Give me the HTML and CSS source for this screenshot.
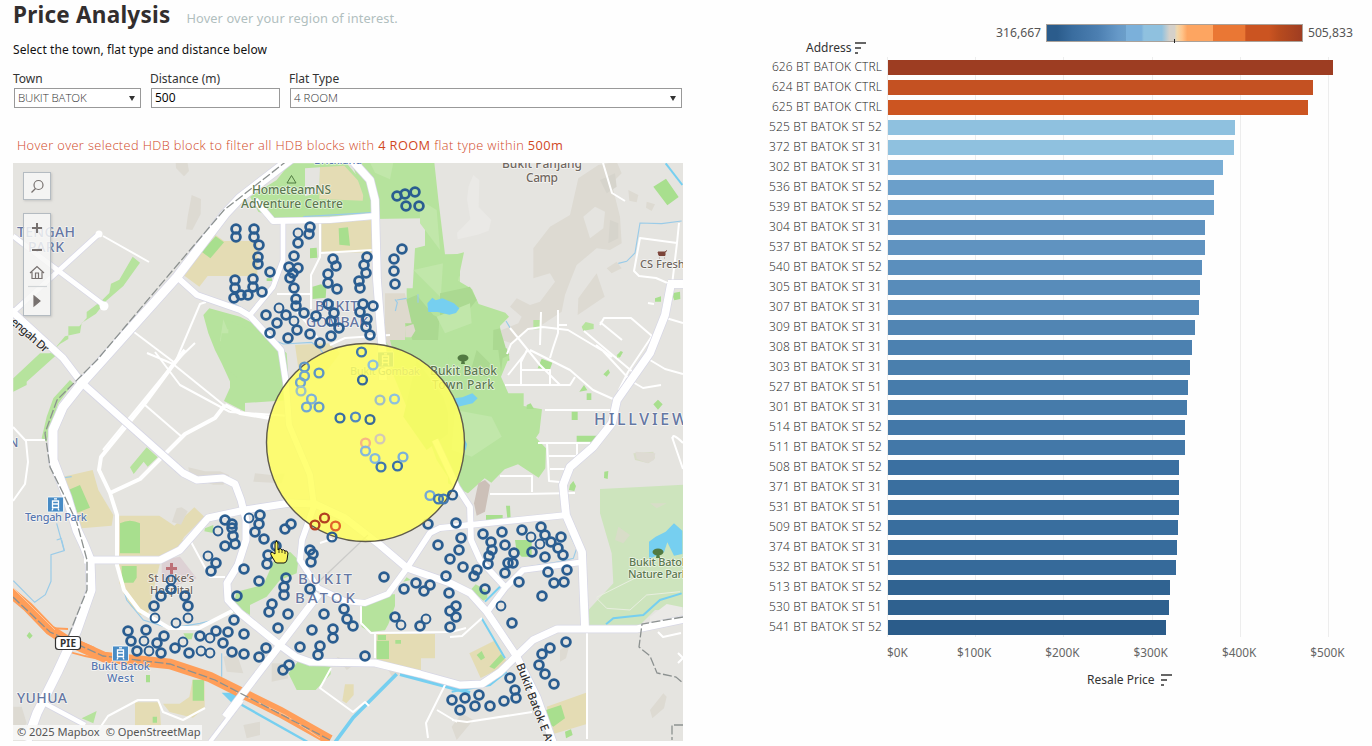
FILE: index.html
```html
<!DOCTYPE html>
<html lang="en">
<head>
<meta charset="utf-8">
<title>Price Analysis</title>
<link rel="stylesheet" href="styles.css">
</head>
<body>
<main class="dashboard">
<section class="left">
  <header class="heading"><h1>Price Analysis</h1><span class="tagline">Hover over your region of interest.</span></header>
  <p class="intro">Select the town, flat type and distance below</p>
  <div class="filters">
    <label class="field town"><span class="caption">Town</span><span class="box"><span class="value">BUKIT BATOK</span><i class="arrow"></i></span></label>
    <label class="field distance"><span class="caption">Distance (m)</span><span class="box"><span class="value strong">500</span></span></label>
    <label class="field flat"><span class="caption">Flat Type</span><span class="box"><span class="value">4 ROOM</span><i class="arrow"></i></span></label>
  </div>
  <p class="hint"><span>Hover over selected HDB block to filter all HDB blocks with <b>4 ROOM</b> flat type within <b>500m</b></span></p>
  <div class="map">
  <svg class="canvas" viewBox="13 163 670 578" width="670" height="578">
    <rect x="13" y="163" width="670" height="578" fill="#e5e4e0"/>
    <!-- land cover, one group per map tile -->
    <g transform="translate(10 160) scale(.33333)">
      <path class="relief" d="M497 5h35l5 28-15 16-24-25zM545 105l28 12-1 45-25 48-19-2 5-38z"/>
      <path class="sand" d="M520 345l52-68 45-52 25 18h100v105H593l-25 32z"/>
      <path class="grass2" d="M575 275l42-46 25 18-41 48z"/>
      <path class="grass" d="M368 290l22 18-50 70-52 45-30 38-43 28-5 30-45 10-50 60-45 40H70l45-45 35-32 25-15v-38h33l22-25 0-18 43-32 25-25 5-28 25-12z"/>
      <path class="grass" d="M580 465l18-20 92 25 60 30 80 80 10 140-150 10-55-120-20-40-20-50z"/>
      <path class="grass3" d="M640 478l12 30h28l10 60-60-25z"/>
    </g>
    <g transform="translate(230 160) scale(.33333)">
      <path class="grass" d="M140 60l40-50h170l50 60 20 40 5 55-150 5-140 5-50-20-25-45z"/>
      <path class="sand" d="M268 22l75-5 60 65-5 40-130-5z"/>
      <path d="M225 25l45-3-3 75-42 12z" fill="#e5e4e0"/>
      <path class="grass" d="M365 8h248l12 110 20 165 45-1v310l60 60v90H530l-70-170v-85l70-2v-100h18l7-120 30-8v-82l-160 2z"/>
      <path class="grass3" d="M420 8h70l-10 50-45-20zM570 120l50 30 10 120-60-80zM550 330l90-20 50 40v60l-60 0z"/>
      <path class="grass4" d="M500 430l60-25 50 60 60 30-20 70-100-20zM610 520l80 30v80z"/>
      <path d="M465 400h60l20 90h-20v50l40 60-70-10-30-50zM525 500l25-8 6 20-12 20h-18z" fill="#ded9cd"/>
      <path class="sand" d="M275 190l152-10v98l-152-3z"/>
      <path class="grass2" d="M326 205l28-3 6 55-32-3zM240 265l20-2 2 30-22 2zM248 380l25-7 16 10-2 30-39 4zM110 355h16v8h-16z"/>
      <path class="sand" d="M195 555l100-5 35 30-60 80h-60z"/>
      <path class="stream" d="M495 418l7 10-6 25M500 420l30-5M564 403v25M605 432l20-6M130 540l30 12 85-5 25 20 15 20M10 430l45 25M220 170l205-12" />
    </g>
    <g transform="translate(450 160) scale(.33333)">
      <path class="relief light" d="M70 45l18 15-2 80 38 40-8 32-33 12-60 14-2-20 40-40-10-60 5-40z"/>
      <path class="relief" d="M385 55l60-40 55-10 15 35-30 30 25 100 5 80-35 20-40-5-60 50-20 50-15 40-10 50-60 40-50 20-40 35-30-10-20 50-20 10v-60l40-30 50-20 10-20-35-30 20-25 40 20 30-10 45-60-15-25-50 15v-90l50-65 60-35zM385 415l55-75 24 70-81 55zM535 90l30 15-5 22-22-5zM590 125l25 8-10 20-17-10zM470 325l30-20 15 20-30 15z"/>
      <path d="M400 170l35-30 30 15-5 50-40 30z" fill="#e5e4e0"/>
      <path d="M450 60l45-20 5 40-30 20zM480 180l25 10v45l-30 15z" fill="#d6d4cc"/>
      <path class="grass2" d="M610 80l38-24 38 55-34 25zM665 400l25-5 1 22-18 4zM615 415l18-6v16h-18z"/>
      <path class="grass" d="M250 480h20v28h-20zM395 500l12-14 24 6v15l-31 5zM500 585l17-11-5 15-10 6zM-20 293l62-16-18 85 42 25 20 45 80 26 11 12-27 28 5 55 23 40v10H-40z"/>
      <path class="grass4" d="M-30 400l90-20 20 40-40 50-70 20zM130 510l20-5 28 95h-50z"/>
      <path class="grass3" d="M-40 470l100-40 5 60-80 30z"/>
      <path class="stream wide" d="M647 10l50 65"/><path class="stream" d="M695 183l-60 8-65-2-15 90-25 25-25 6M168 483l12 20"/>
      <path class="river" d="M-68 430l15-17 10 8 20-6 35 15 16 15-10 14-20 5-35-8-28 0z"/>
    </g>
    <g transform="translate(10 350) scale(.33333)">
      <path class="grass" d="M90 10h55L50 95v10L10 125V85z"/>
      <path class="grass" d="M180 90l10 10-45 60-25 75-10 40-15-10 15-65 20-55z"/>
      <path class="grass" d="M635-50l70 0v235l-63-32 18-40v-85l-30-30z"/>
      <path class="sand" d="M160 380l88-20 17 60 45 75-5 32-90 8-20-40-40-75zM328 497h120l45 30 60-55 30 28-60 60-25 40h-60v50l-25 150-50-30-35-70z"/>
      <path class="grass2" d="M175 420l35-15 30 68-38 15zM330 520q30-15 60 0v90h-60z"/>
      <path class="grass" d="M360 352l50-60 33 30-30 28-12-15-30 37zM585 535l25-10v24l-27-5z"/>
      <path class="relief" d="M535 352l50 12 45 0 28 12-18 28-30 0-70-22zM500 475l15-3 18 12-20 40-27-8z"/>
      <path class="stream" d="M185 380l-24 3 28 70M140 520l22 80"/>
    </g>
    <g transform="translate(230 340) scale(.33333)">
      <path class="grass" d="M-5-60l100 45 65 65 2 70-45-15h-50l-30 20-42-35z"/>
      <path class="grass" d="M480 0h240v390l-40 60-60-90-40-110-60-100z"/>
      <path class="grass4" d="M560 60l80 110 30 100-80 60-70-100z"/>
      <path class="relief" d="M75 400l50 5 40-5-10 30-85-5z"/>
      <path class="river" d="M680 175l20-10 40-10-10 35-48 15zM703 290l8 15-5 25-10-5z"/>
    </g>
    <g transform="translate(450 350) scale(.33333)">
      <path class="grass" d="M-5 0h175l8 20-25 60 22 50h46l0 38 55 10-8 70-10 15 30 32-2 60-20 28-62-40-40 15-40 40-20-13-50 45-60-30z"/>
      <path class="grass4" d="M145 0l25-5 8 20-20 10-5 40zM80 0l40 40-10 40-50-10z"/>
      <path class="grass3" d="M15 180l110 20 30 60-90 60-60-20z"/>
      <path d="M85 400l20-10 15 15-15 80-25 12-8-37z" fill="#ccc0b8"/>
      <path class="river" d="M12 145l25-3 30-12 16 15-15 15-50 12zM43 267l8 15-4 20-5-10z"/>
      <path class="grass2" d="M263 55l12-29 32 12-7 20zM388 125l14-20 10 16zM410 130h14v20h-14zM365 185h18v25h-18zM380 257h62l-15 18h-47zM463 365l12-2-2 24-11-3zM360 405l10-12 8 15-5 15-16-3zM460 73l15-15 5 10-10 12zM610 163l14-14 14 14-14 16zM108 495h50v20h-50zM168 467l12 0 2 40-10-2zM502 15l10-12 7 4-10 16zM230 165l12-5 10 17h-22z"/>
      <path d="M450 417l120-6 130-7v376l-85 0-60 60-140 0V780L490 700l-5-90-35-120z" fill="#cde4bd"/>
      <path d="M505 530l35 25-20 25-25-10zM600 460l50 0-30 15zM550 310l60-5 5 20-20 15-40-10z" fill="#d8ddc8"/>
      <path d="M556 305l60 5-4 20-20 10-32-14z" fill="#dedbd3"/>
      <path class="river" d="M597 575l20-15 30-15 25-25 25 22v70l-25 5-20-40-10 30-45 20z"/>
    </g>
    <g transform="translate(10 540) scale(.33333)">
      <path class="sand" d="M330 0h200l-15 35-60 15-20 80-20 85-25 10-50-65-15-60zM375 487h73l5 70h-78zM548 418h36v85l-35 30-70-17-20-25h50l29-20z"/>
      <path class="grass2" d="M330-10h60v50h-60zM335 78h45v35l-10 15h-35zM548 420h34v62h-34zM408 405h12v22h-12zM428 530h13v18h-13zM50 287l8-11 10 11-9 10z"/>
      <path d="M455 60l55-10 50 65-60 20-45-10z" fill="#ddd1d4"/>
      <path class="relief" d="M10 500l25 0 15 50-25 30-15-10zM640 350l40-10 20 60-50-5z"/>
      <path class="grass" d="M215 535l45-22-10 37zM520 280h30l-5 18h-15zM665 220v-20l25-10v25z"/>
      <path class="stream" d="M155 0l8 32-40 12 0 80-17 40-32 23-64-65M325 90l25 90 50 60 80 25 90-15 40-10M635 340v70M140 0l15-5"/>
      <path class="river" d="M635 458h55l-25 30z"/>
    </g>
    <g transform="translate(230 540) scale(.33333)">
      <path class="grass" d="M205 60l-5 40-50 20-40 50-50 25 0 30-50-30 10-40 80-20 30-70 50-30zM390 195l50-20 35-12h20v35l-20 55-10 18-45 5-25-15zM175 400l30-37 97 18v22l-45 47h-57zM520 125l10-13 12 8z"/>
      <path class="sand" d="M440 282h175v73h-42v40l-133-37zM345 433h26v32l-22 25-12-8z"/>
      <path class="grass2" d="M440 302h37v55h-37zM443 285h25v15h-25zM496 300h17v11h-17z"/>
      <path class="relief" d="M125 370l40 0 10 45-50 10zM40 555l50-10 0 40-40 10zM320 350l60 20-30 20zM470 380l40 20-20 18z"/>
      <path class="canal" d="M500 402l-130 130-55 75M510 403l210 55"/>
      <path class="canal thin" d="M0 475l240 135"/>
    </g>
    <g transform="translate(450 540) scale(.33333)">
      <path class="grass2" d="M195 0h50v50h-30l-15-15z"/><path class="grass" d="M62 150l15-17 35 20v22l-12 7z"/>
      <path class="sand" d="M58 340l75-38 42 70-83 42zM290 500l118-42v95l-95 28z"/>
      <path class="grass2" d="M80 345l15-12 10 20-12 8zM118 380l35-38 10 15-30 30zM288 510l45-15 12 40-35 25-8-5zM345 575l18-7 5 17-20 10z"/>
      <path class="relief" d="M330 330l30-20-12 45-18 10zM600 510l40-50 10 10-8 35-35 30zM5 560l30-40 35 20-50 60z"/>
      <path class="relief light" d="M600 230l50-38 48 10v40l-98 10z"/>
      <path class="stream wide" d="M695 160l-65 20-50 45-90 10-22 18M95 235l70 120M105 185l50-50M170 395l-50 40-115 20"/>
      <path class="stream" d="M210 85l120-20 40-10 10-30-20-40M342-75l30 80"/>
      <path d="M440 175l30 30 70 5 50-45 100-10M440 172l130-65" class="path"/>
    </g>
    <!-- expressway -->
    <path d="M10 592L28 607 50 630 64 639 104 657 170 664 210 677 240 692 280 712 330 740" fill="none" stroke="#ff9e59" stroke-width="10.500"/>
    <path d="M48 628L68 629M62 650L85 656 110 661M72 638L95 648" fill="none" stroke="#ff9e59" stroke-width="1.800"/>
    <path d="M236 692L285 715 320 738M13 588L55 630" fill="none" stroke="#ffd0ad" stroke-width=".8"/>
    <!-- minor streets -->
    <g class="minor">
      <path d="M103 236L149 262M134 332L175 363 200 304 206 302M195 343L174 363 130 417 103 450M155 352L180 385 230 412M145 405L182 437M147 353L173 364 225 406 240 411"/>
      <path class="double" d="M185 350L173 365 145 403 101 457 99 470 110 493M110 493l30-14 45-45 30-16 10-13M110 493l7 22v50l7 25 15 20 30 18h30l35-18M225 405l15 8 30 5"/>
      <path d="M13 427l13 14 2 21-3 22-12 17M25 440h20"/>
      <path d="M320 222v35l-9 18v19h-34M320 253l53-3M311 294v15M330 345l15-7 45-3M320 341l-15-20-10-12M230 412l60 4"/>
      <path d="M603 163l9 30 13 8M640 238l37 5-5 42-16-7-17-2-5-5 6-33zM677 243l2-20M654 304l-6-1M683 323l-17-5"/>
      <path d="M541 312l-1 33M558 310v23l-5 15-3 10M557 325h10M510 328l30 37 20 20M507 354l4-10 17-15 15-2 25 3 35 21 28 30 12 7 18-3M528 350l-20 25M600 325l4-7 27 0 21 18-24 36-9 18M584 331l50 42M600 322l22 18M612 357l-16-12M527 350l-6 12v23M520 370h30v15M505 385h65l5-8M530 350l40 20 23 20 20 9M545 410h66M538 443h52M547 443l2 38 11 1M577 443v13h-28M550 469h16M500 476h32v16M490 494h35l50-1M650 360l15 9 18 5M672 437l11 32M683 443q-12-12-10-3"/>
      <path d="M587 629v110M450 637l12-1 20-18M452 720l15 2 65-10M428 738l-2-15 20-40M437 710l20 12M331 668l-11 20 33 24 12-10 4 4M361 605v18l10 10 80-1 15-4M375 633v25M320 543l12-4M93 738l15-22 30-16h20l5 12 20 8 22-12M190 540l20 37h15"/>
      <path d="M658 632l5 5 18-4M678 653l5 5-5 5"/>
    </g>
    <!-- arterial roads: casing then surface -->
    <defs>
      <g id="roads">
        <path class="r9" d="M292 158L240 198 225 214 177 277 100 363 82 383 63 407 53 430 53 460 67 497 77 530 84 545 90 560 91 590 77 630 57 673 37 713 27 741"/>
        <path class="r7" d="M5 305L63 358 82 383 183 473 197 480 223 478 235 484 241 500 246 520 246 540 238 565 227 583 228 600 240 613 277 643 296 657 310 662 375 663 420 674 460 685 482 684 500 672 533 640 557 629 637 629 685 619"/>
        <path class="r8" d="M350 158L370 180 375 200 377 280 382 345 383 380"/>
        <path class="r6" d="M255 200L273 221 330 220 375 216M177 277L197 295 240 310 250 316 281 350 286 383 289 425 310 475 314 506 302 540 300 560 318 588 345 601 365 603 388 594 407 568 430 533 440 528 567 515"/>
        <path class="r5" d="M283 222v38l-10 27-23 28M13 236L60 272 105 306M10 315L100 233M42 702L85 725"/>
        <path class="r7" d="M84 560H160L180 550 208 518 245 510 290 503 315 504 345 518 380 545 407 568 450 583 470 593 487 612 517 657 537 697 553 742M319 594L225 717"/>
        <path class="r6" d="M435 440L457 487 470 507 471 540 480 560 505 587M487 612L505 588 523 570 583 562"/>
        <path class="r8" d="M671 284L665 315 650 353 617 400 612 423 593 447 570 467 563 485 566 515 582 552 585 628M668 284h16"/>
        <path class="r4" d="M210 742L242 700"/>
      </g>
    </defs>
    <use href="#roads" class="casing"/><use href="#roads" class="surface"/>
    <circle cx="104" cy="306" r="4.500" fill="#fff"/><circle cx="99" cy="234" r="3.500" fill="#fff"/>
    <path class="rail" d="M288 160L224 210 173 270 97 360 57 400 45 433 50 467 63 493 77 523 87 560 87 590 68 637M13 597L50 632 103 656 170 664 215 680 330 740M683 617L642 624 639 647 650 656 657 673 676 677 683 683M683 725h-11v15"/>
    <path d="M308 592L368 535" stroke="#cbcbc9" stroke-width="1.200" fill="none"/>
    <!-- place labels -->
    <g class="label">
      <g class="area" font-size="14"><text x="17" y="237" textLength="58">TENGAH</text><text x="28" y="252" textLength="36">PARK</text><text x="9" y="447" font-size="12">N</text>
        <text x="594" y="424.500" font-size="16" textLength="93">HILLVIEW</text><text x="315" y="311" textLength="43">BUKIT</text><text x="306" y="327" textLength="62">GOMBAK</text>
        <text x="298" y="584" font-size="15" textLength="54">BUKIT</text><text x="295" y="603" font-size="15" textLength="60">BATOK</text><text x="17" y="703" textLength="50">YUHUA</text></g>
      <g class="poi"><text x="502" y="168" textLength="80">Bukit Panjang</text><text x="526" y="182" textLength="32">Camp</text><text x="640" y="268" font-size="11">CS Fresh</text><text x="148" y="582" textLength="46" font-size="11">St Luke’s</text><text x="150" y="594" textLength="43" font-size="11">Hospital</text></g>
      <g class="nature"><text x="252" y="194" textLength="79">HometeamNS</text><text x="241" y="208" textLength="102">Adventure Centre</text><text x="430" y="375" textLength="67">Bukit Batok</text><text x="432" y="389" textLength="62">Town Park</text><text x="629" y="566" textLength="59" font-size="11">Bukit Batok</text><text x="628" y="578" textLength="60" font-size="11">Nature Park</text></g>
      <g class="station"><text x="314" y="164" textLength="48">Brickland</text><text x="25" y="521" textLength="62">Tengah Park</text><text x="91" y="670" textLength="59">Bukit Batok</text><text x="107" y="682" textLength="27">West</text><text x="350" y="375" textLength="70">Bukit Gombak</text></g>
      <g class="road"><text transform="translate(10 323) rotate(41)" textLength="46">engah Dr</text><text transform="translate(516 665) rotate(69)" textLength="88">Bukit Batok E Av</text></g>
    </g>
    <!-- symbols -->
    <path d="M287 183l4.500-7.500 4.500 7.500z" fill="none" stroke="#4f7a40"/>
    <g fill="#527a42"><ellipse cx="463" cy="358" rx="5.500" ry="3.500"/><path d="M462 359h2l1 5h-4z"/><ellipse cx="658" cy="552" rx="5.500" ry="3.500"/><path d="M657 553h2l1 5h-4z"/></g>
    <path d="M658 252h7v3.500h-6zM659.500 258h.5M664 258h.5M665 252l2-1.500" fill="#7c4438" stroke="#7c4438"/>
    <path d="M170 563h3v4h4v3h-4v4h-3v-4h-4v-3h4z" fill="#bd7077"/>
    <g id="st"><rect x="47.500" y="497" width="16" height="15" rx="1" fill="#478bc5" stroke="#fff" stroke-width=".8"/><path d="M54 498.800h3M52.500 501h6v6.500h-6zM52.500 504h6M53 508.500l-1 2M58 508.500l1 2" fill="none" stroke="#fff" stroke-width="1.300"/></g>
    <use href="#st" x="65" y="149"/><use href="#st" x="330" y="-145"/>
    <rect x="55.500" y="636.500" width="25" height="13" rx="3" fill="#fff" stroke="#333" stroke-width="1.200"/><text x="60" y="647" class="shield" textLength="16">PIE</text>
    <g id="marks"></g>
    <circle cx="365.500" cy="442.500" r="99" fill="#ffff60" fill-opacity=".86" stroke="#5f5b4c" stroke-width="1.400"/>
    <g id="inner"></g>
    <path d="M276 541q2 0 2 3v6l1-1q2-1 3 1 2-1 3 1 2-1 3 2l-1 7q-1 3-3 3h-7q-2 0-3-3l-3-5q-1-2 1-3l3 2v-10q0-3 2-3z" fill="#f8f45c" stroke="#111"/><path d="M279 549v4M282 550v3M285 551v3" stroke="#111" stroke-width=".8"/>
  </svg>
  <div class="tool search"><svg width="27" height="27"><circle cx="14.500" cy="12" r="4.500"/><path d="M11.500 15.500L7.500 19.500"/></svg></div>
  <div class="tool zoom"><svg width="27" height="101"><path class="bold" d="M8 14h10M13 9v10M8 36h10"/><path d="M6 59l7-6.500 7 6.500M8 58v6.500h10V58M11.500 64v-5h3v5"/><path d="M4 72.500h19" stroke="#d0d4d6"/><path class="solid" d="M10 82l6 5-6 5z"/></svg></div>
  <div class="credit"><span>© 2025 Mapbox</span><span>© OpenStreetMap</span></div>
  </div>
</section>
<section class="right">
  <div class="legend"><span>316,667</span><div class="ramp"><i></i></div><span>505,833</span></div>
  <div class="axis-head"><span>Address</span><svg class="sort" width="12" height="12"><path d="M0 1h11M0 6h6M0 11h3"/></svg></div>
  <div class="plot"><div class="grid"><i></i><i></i><i></i><i></i><i></i><i></i></div><div id="rows" class="rows"></div></div>
  <div class="ticks"><span>$0K</span><span>$100K</span><span>$200K</span><span>$300K</span><span>$400K</span><span>$500K</span></div>
  <div class="axis-foot"><span>Resale Price</span><svg class="sort" width="12" height="12"><path d="M0 1h11M0 6h6M0 11h3"/></svg></div>
</section>
</main>
<script src="app.js"></script>
</body>
</html>
```
FILE: styles.css
```css
*{box-sizing:border-box}
body{margin:0;background:#fefefe;font-family:"Noto Sans","Open Sans",sans-serif;color:#333;overflow:hidden}
h1,p{margin:0}
.dashboard{display:flex;width:1372px;height:746px}
.left{width:683px;padding-left:13px;display:flex;flex-direction:column}
.heading{height:36px;display:flex;align-items:baseline;gap:16px;white-space:nowrap}
h1{font-size:22.500px;line-height:30px;font-weight:700;letter-spacing:.23px;color:#322e2e}
.tagline{font-size:12.800px;color:#b1bfbe;letter-spacing:.12px}
.intro{font-size:12px;line-height:18px;height:36px;padding-top:5px;letter-spacing:.08px;color:#111}
.filters{display:flex;height:38px;gap:9px}
.field{display:flex;flex-direction:column}
.town{width:128px}.distance{width:130px}.flat{width:393px}
.caption{font-size:12px;line-height:14px;height:16px}
.box{height:20px;margin-left:1px;border:1px solid #999;background:#fff;display:flex;align-items:center;justify-content:space-between;padding:0 5px 0 3px}
.value{font-family:"Open Sans",sans-serif;font-size:11.500px;line-height:16px;font-weight:300;color:#333}
.town .value{letter-spacing:-.1px}
.strong{font-size:12px;font-weight:500;color:#000}
.arrow{border:3.500px solid transparent;border-top:5px solid #333;border-bottom:0}
.hint{height:53px;padding:25px 0 0 4px;font-family:"Open Sans",sans-serif;font-size:12.800px;line-height:20px;font-weight:300;letter-spacing:.39px;color:#d1481f;white-space:nowrap}
.hint b{font-weight:500}
.map{position:relative;width:670px;height:578px;overflow:hidden}
.canvas{display:block}
.grass{fill:#b6e39d}.grass2{fill:#a8df8e}.grass3{fill:#c1e7aa}.grass4{fill:#abd991}
.sand{fill:#e4dcb4}.relief{fill:#dddad2}.light{fill:#eae9e6}.river{fill:#76cff0}
.stream{fill:none;stroke:#9acbe8;stroke-width:3.500}
.wide{stroke:#76cff0;stroke-width:6}
.canal{fill:none;stroke:#76cff0;stroke-width:11}.thin{stroke-width:7}
.path{fill:none;stroke:#e8eee0;stroke-width:3}
.minor{fill:none;stroke:#fff;stroke-width:2;stroke-linejoin:round}
.double{stroke-width:4}
.casing{fill:none;stroke:#d6d6e5;--extra:1.400px;stroke-linejoin:round}
.surface{fill:none;stroke:#fff;--extra:0px;stroke-linejoin:round}
.r9{stroke-width:calc(9px + var(--extra))}.r8{stroke-width:calc(7.800px + var(--extra))}.r7{stroke-width:calc(7px + var(--extra))}.r6{stroke-width:calc(5.800px + var(--extra))}.r5{stroke-width:calc(4.800px + var(--extra))}.r4{stroke-width:calc(4px + var(--extra))}
.rail{fill:none;stroke:#8c9190;stroke-width:1.300;stroke-dasharray:9 2.500}
.label{font-size:12px;font-weight:500;paint-order:stroke;stroke:#ffffffb0;stroke-width:1.500px;stroke-linejoin:round}
.label text{paint-order:stroke}
.area{fill:#6577a3}.poi{fill:#70675f}.nature{fill:#5c7850}.station{fill:#5878b0;font-size:11px}.road{fill:#333;font-size:11.500px}
.shield{font-size:10px;font-weight:700;fill:#333}
.tool{position:absolute;left:10px;width:28px;border:1px solid #b4bbc1;background:#f7f7f6d8;box-shadow:1px 1px 2px #aaa8}
.search{top:9px;height:28px}.zoom{top:50px;height:103px}
.tool svg{display:block;fill:none;stroke:#77716f;stroke-width:1.200}
.tool .bold{stroke-width:2}.tool .solid{fill:#77716f}
.credit{position:absolute;left:0;bottom:1px;height:15px;padding:0 2px 0 4px;display:flex;gap:6px;background:#f8f8f7e0;font-size:11.100px;line-height:14px;color:#555;white-space:nowrap}
.right{width:689px;padding-top:24px}
.legend{display:flex;align-items:center;height:18px;margin-left:313px;gap:4px;font-size:12.200px;line-height:18px;color:#555}
.legend span{width:46px;text-align:right;white-space:nowrap}
.legend span:first-child{width:47px;margin-right:-1px;text-align:left}
.ramp{flex:none;width:257px;height:18px;border:1px solid #aaa29a;background:linear-gradient(90deg,#2b5c8c 0 4%,#3a6d9f 10%,#4c7fb1 20%,#6699c8 28%,#6c9fc9 31%,#7bb0da 31% 37%,#8fc1df 38% 45%,#d5d1ca 48% 50%,#f0d8ac 51%,#ffc48a 53%,#fda561 55% 65%,#ea7734 65% 77.500%,#cb5421 78% 87%,#b84b1e 91%,#9f3d22 100%);position:relative}
.ramp i{position:absolute;left:127px;bottom:-2px;width:1px;height:4px;background:#222}
.axis-head{display:flex;align-items:center;gap:4px;height:16px;margin:-2px 0 0 123px;font-size:12px;line-height:16px}
.sort{stroke:#666;stroke-width:2}
.plot{display:grid;height:580px;margin-top:1px}
.plot>*{grid-area:1/1}
.grid{display:flex;margin-left:204px;width:442px;justify-content:space-between}
.grid i{width:1px;background:#ededed}
.rows{display:flex;flex-direction:column}
.row{height:20px;display:flex;align-items:center;gap:6px}
.row span{width:199px;text-align:right;font-family:"Open Sans",sans-serif;font-size:12px;line-height:20px;font-weight:300;letter-spacing:.13px;color:#222}
.row i{height:15px;margin-top:1px}
.ticks{display:flex;margin-left:204px;font-size:11.800px;color:#666;line-height:18px;height:28px;padding-top:6px}
.ticks span{flex:none;width:88.300px;text-align:center}
.ticks span:first-child{width:43px;text-align:left}
.axis-foot{display:flex;gap:6px;align-items:center;margin-left:404px;font-size:12px;line-height:18px;padding-top:6px}
```
FILE: app.js
```js
const NS = 'http://www.w3.org/2000/svg';
const navy = '#2a5d90';
const points = `236,229 236,237 254,229 254,237 259,245 258,257 258,264 270,272 235,280 235,288 253,279 253,287 262,292 234,298 241,295 248,295 310,227 309,234 298,233,1 298,243 294,256 289,267 298,268 293,273 290,278 294,288 296,299 296,306 304,313 279,308,1 286,315 266,315 277,323 270,333 294,321,1 297,330 288,338 310,334 316,316 320,343 333,259 336,266 328,274 328,283 337,289 328,304 334,313 331,321 339,328 331,336 367,257 364,265 366,273 359,281 360,288 363,304 373,306 360,312 367,319 366,327 370,335 397,196 405,194 415,192 406,206 419,206 402,249 394,259 394,271 395,284
428,524 456,523 461,538 438,545 249,518,1 260,515 259,524 255,532 264,539 285,529 291,524 232,524 225,520 232,528 218,531,1 233,536 235,544 225,546 276,546 208,556,1 216,563 211,571 171,580,1 171,589 161,596 185,596 154,606 188,606 155,618,1 188,618,1 176,623,1 128,631 146,630 131,641 144,641,1 137,651 149,651,1 164,636 157,643 161,653 175,648 183,642,1 189,653 200,636 210,638,1 216,631 201,651,1 210,653,1 228,632 223,643 234,620 232,652 237,596
244,569 268,555 267,564 259,581 310,550 313,554 311,562 286,578 284,587 284,595 310,589 272,604 269,612 288,614 278,628 244,634 244,654 266,648 259,657 289,665 283,670 300,647 320,646 318,655 312,630 333,629 333,638 324,614 344,609 347,619 353,626 365,656 384,577 395,617 401,625,1 404,589 416,583 424,591 430,585 426,619,1 420,626 446,576 449,593 450,559 456,606 450,611 456,617 450,627 452,700 460,710
459,550 492,550 489,556 488,564 505,545 514,553 508,563 513,563 505,573 463,567 477,570 474,576 485,589 519,582 501,606,1 512,623 532,552 545,557 540,544,1 558,548 563,555 548,572 567,570 554,583 564,582 542,596 566,642 550,648 542,654 539,665 545,674 554,684 510,678 515,690 516,698 504,701 479,695 490,706 475,706 465,698 483,534 491,542 502,532 522,530 531,537,1 541,527 545,535 551,542 561,537`.split(/\s+/);
const inner = `361.500,352,#3f77ad 373,365,#8cc0de 362.500,380,#35689b 304.500,367,#5f96c6 319,373,#5c94c4 304.500,376,#6ea4cf 300.500,382.500,#6ea4cf 301,391,#9cc3c8 311.500,399,#7db1d9 306.500,407,#71a6d2 319,407,#659bca 380,400,#a1bfc4 394.500,399,#8cc0de 340,418,#386ea4 355.500,417,#5088bd 370,419.500,#3b6b96 365.500,443,#f6b684 380,439,#d3c9b6 365.500,451,#83b8dc 375,458.500,#83b8dc 381,467,#3f77ad 397.500,466,#396fa6 403,457,#7ab0d8 430,495.500,#75a9d5 438.500,499,#4279b0 443.500,499,#4279b0 452.500,495,#2a5d90 324.500,518,#b23f21 315,525,#b23f21 335.500,526,#e0642c 332,537,#2a5d90`.split(/\s+/);
function ring(parent, x, y, color, width) {
  const c = document.createElementNS(NS, 'circle');
  const attrs = { cx: x, cy: y, r: 4.4, fill: 'none', stroke: color, 'stroke-width': width };
  for (const k in attrs) c.setAttribute(k, attrs[k]);
  document.getElementById(parent).appendChild(c);
}
points.forEach(p => { const [x, y, thin] = p.split(','); ring('marks', x, y, navy, thin ? 2 : 2.8); });
inner.forEach(p => { const [x, y, color] = p.split(','); ring('inner', x, y, color, 2.4); });
const bars = [
  ['626 BT BATOK CTRL', 445, '#9d3d22'], ['624 BT BATOK CTRL', 425, '#c45122'], ['625 BT BATOK CTRL', 420, '#cc5521'],
  ['525 BT BATOK ST 52', 347, '#8fc1df'], ['372 BT BATOK ST 31', 346, '#8fc1df'], ['302 BT BATOK ST 31', 335, '#7aaed5'],
  ['536 BT BATOK ST 52', 326, '#6b9fca'], ['539 BT BATOK ST 52', 326, '#6b9fca'], ['304 BT BATOK ST 31', 317, '#6093c0'],
  ['537 BT BATOK ST 52', 317, '#6093c0'], ['540 BT BATOK ST 52', 314, '#5b8fbd'], ['305 BT BATOK ST 31', 312, '#588cba'],
  ['307 BT BATOK ST 31', 311, '#578bb9'], ['309 BT BATOK ST 31', 307, '#5185b3'], ['308 BT BATOK ST 31', 304, '#4c81b0'],
  ['303 BT BATOK ST 31', 302, '#4a7fad'], ['527 BT BATOK ST 51', 300, '#477cab'], ['301 BT BATOK ST 31', 299, '#467baa'],
  ['514 BT BATOK ST 52', 297, '#4378a8'], ['511 BT BATOK ST 52', 297, '#4378a8'], ['508 BT BATOK ST 52', 291, '#3b70a1'],
  ['371 BT BATOK ST 31', 291, '#3a6f9f'], ['531 BT BATOK ST 51', 291, '#3a6f9f'], ['509 BT BATOK ST 52', 290, '#396e9e'],
  ['374 BT BATOK ST 31', 289, '#376c9c'], ['532 BT BATOK ST 51', 288, '#366a9a'], ['513 BT BATOK ST 52', 282, '#306391'],
  ['530 BT BATOK ST 51', 281, '#2f618f'], ['541 BT BATOK ST 52', 278, '#2b5c8a']
];
document.getElementById('rows').innerHTML = bars.map(([name, w, c]) =>
  `<div class="row"><span>${name}</span><i style="width:${w}px;background:${c}"></i></div>`).join('');
```
